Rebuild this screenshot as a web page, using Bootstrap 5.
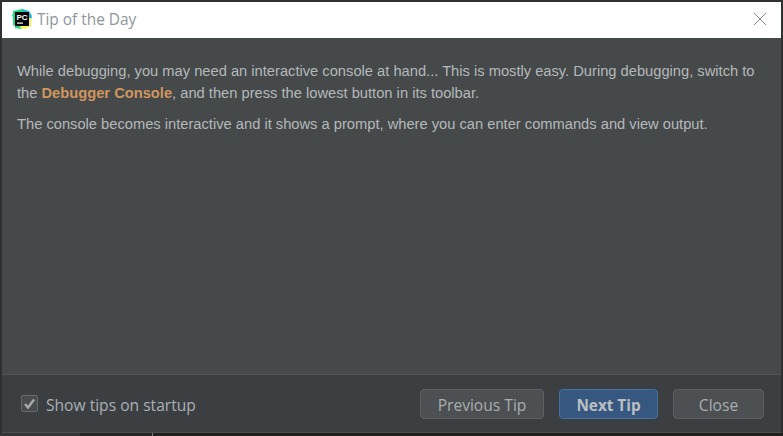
<!DOCTYPE html>
<html lang="en">
<head>
<meta charset="utf-8">
<title>Tip of the Day</title>
<link href="https://cdn.jsdelivr.net/npm/bootstrap@5.3.0/dist/css/bootstrap.min.css" rel="stylesheet">
<style>
html,body{height:100%;margin:0;background:#2b2b2b;overflow:hidden}
.tip-win{height:436px;padding:2px 2px 0 2px;background:#2f3031}
.tip-inner{height:431px;background:#45494a}
.tip-title{height:36px;background:#fff;padding:0 14px 2px 10px;flex:none}
.tip-title-text{font:15.4px "Open Sans",sans-serif;color:#8e959c;margin-left:5px;line-height:20px;padding-top:2px}
.tip-body{flex:1;padding:22px 15px 0 15px;font:14.7px/22px "Liberation Sans",sans-serif;color:#b4b8ba}
.tip-body p{margin:0 0 9px}
.tip-body b{color:#d0965e;font-weight:700}
.tip-foot{height:59px;flex:none;background:#3c3f41;border-top:1px solid #545658;border-bottom:1px solid #4a4c4e;padding:0 17px 0 19px;font:15.6px "Open Sans",sans-serif;color:#a9b0b6}
.tip-label{padding-top:2px}
.tip-check{width:17px;height:17px;border:1px solid #676a6c;border-radius:2px;background:#484c4e;margin-right:8px}
.tip-btn{height:30px;border:1px solid #5c5f61;border-radius:4px;background:#4c5052;color:#a8adb0;font:15.6px/30px "Open Sans",sans-serif;padding:0}
.tip-prev{width:124px}
.tip-next{width:99px;margin:0 15px;background:#365880;border-color:#46709f;color:#bbbfc2;font-weight:700;font-size:15.3px}
.tip-close{width:91px}
.tip-strip{height:3px;margin:0 -2px;background:linear-gradient(to right,#333436 0 80px,#262525 80px 152px,#77797b 152px 153px,#211f1d 153px)}
</style>
</head>
<body>
<div class="tip-win">
  <div class="tip-inner d-flex flex-column">
    <div class="tip-title d-flex align-items-center">
      <svg width="20" height="20" viewBox="0 0 20 20" aria-hidden="true">
        <polygon points="1,2 10,0 13,2 1,17" fill="#21d789"/>
        <polygon points="0,5 3,19 9,20 14,17 5,8" fill="#21d789"/>
        <polygon points="10,0 17,2 20,7 19,11 12,5" fill="#18b6d6"/>
        <polygon points="12,10 19,9 19,17 13,20 8,19" fill="#fcf84a"/>
        <rect x="3" y="3" width="14" height="14" fill="#000"/>
        <rect x="5" y="13.5" width="6" height="1.2" fill="#fff"/>
        <text x="4.4" y="11" font-family="Liberation Sans" font-size="8" font-weight="700" fill="#fff">PC</text>
      </svg>
      <span class="tip-title-text">Tip of the Day</span>
      <svg class="ms-auto" width="14" height="14" viewBox="0 0 14 14" aria-hidden="true"><path d="M1 1L13 13M13 1L1 13" stroke="#8a8a8a" stroke-width="1" fill="none"/></svg>
    </div>
    <div class="tip-body">
      <p>While debugging, you may need an interactive console at hand... This is mostly easy. During debugging, switch to the <b>Debugger Console</b>, and then press the lowest button in its toolbar.</p>
      <p>The console becomes interactive and it shows a prompt, where you can enter commands and view output.</p>
    </div>
    <div class="tip-foot d-flex align-items-center">
      <span class="tip-check d-flex align-items-center justify-content-center">
        <svg width="13" height="13" viewBox="0 0 13 13" aria-hidden="true"><path d="M2 7L5 10.5L11 2.5" stroke="#a6a9ab" stroke-width="2.4" fill="none"/></svg>
      </span>
      <span class="tip-label">Show tips on startup</span>
      <button type="button" class="btn tip-btn tip-prev ms-auto">Previous Tip</button>
      <button type="button" class="btn tip-btn tip-next">Next Tip</button>
      <button type="button" class="btn tip-btn tip-close">Close</button>
    </div>
  </div>
  <div class="tip-strip"></div>
</div>
<script src="https://cdn.jsdelivr.net/npm/bootstrap@5.3.0/dist/js/bootstrap.bundle.min.js"></script>
</body>
</html>
